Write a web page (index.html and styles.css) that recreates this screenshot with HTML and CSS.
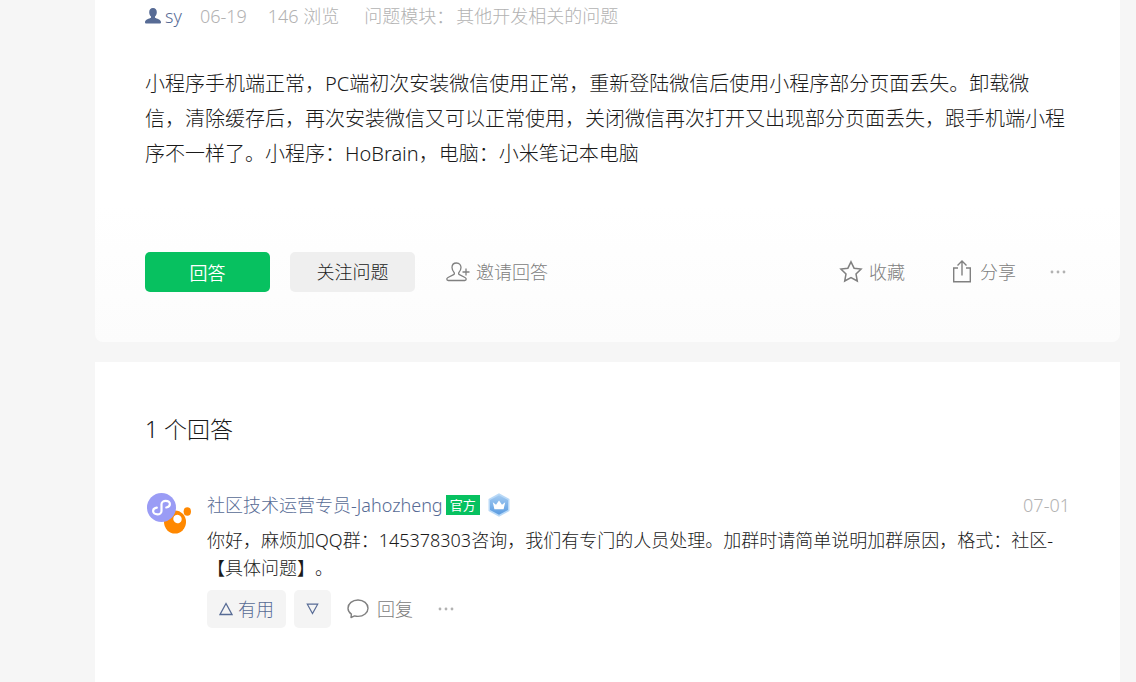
FILE: index.html
```html
<!DOCTYPE html>
<html lang="zh-CN">
<head>
<meta charset="utf-8">
<title>社区问题</title>
<link rel="stylesheet" href="styles.css">
</head>
<body>
<main class="page">
  <article class="card question">
    <div class="meta">
      <a class="author" href="#"><svg width="16" height="16" viewBox="0 0 16 16" fill="currentColor" aria-hidden="true"><path d="M8 0C5.500 0 4.200 1.800 4.200 4.200c0 1.800.7 3.400 1.800 4.300v1.200C4.500 10.500 0 11.500 0 14v.6c0 .5.400.9.900.9h14.200c.5 0 .9-.4.900-.9V14c0-2.500-4.500-3.500-6-4.300V8.500c1.100-.9 1.800-2.500 1.800-4.300C11.800 1.800 10.500 0 8 0z"/></svg>sy</a>
      <span class="date">06-19</span>
      <span class="views">146 浏览</span>
      <span class="module">问题模块：</span>
      <span>其他开发相关的问题</span>
    </div>
    <p class="content">小程序手机端正常，PC端初次安装微信使用正常，重新登陆微信后使用小程序部分页面丢失。卸载微信，清除缓存后，再次安装微信又可以正常使用，关闭微信再次打开又出现部分页面丢失，跟手机端小程序不一样了。小程序：HoBrain，电脑：小米笔记本电脑</p>
    <div class="actions">
      <button class="btn primary" type="button">回答</button>
      <button class="btn" type="button">关注问题</button>
      <button class="link invite" type="button"><svg width="24" height="20" viewBox="0 0 24 20" fill="none" stroke="currentColor" stroke-width="1.300" stroke-linejoin="round" aria-hidden="true"><path d="M10.500 1C7.500 1 6 3 6 5.600c0 2.200 1 3.500 2 4.700.6.800.5 1.900-.4 2.400L2 15.500c-.8.400-1.200.9-1.200 1.600 0 .9.500 1.400 1.400 1.400h16.600c.9 0 1.400-.5 1.400-1.400 0-.7-.4-1.200-1.200-1.600l-5.600-2.800c-.9-.5-1-1.600-.4-2.400 1-1.200 2-2.500 2-4.700C15 3 13.500 1 10.500 1zM16.500 10h7M20 6.500v7"/></svg>邀请回答</button>
      <button class="link favorite" type="button"><svg width="24" height="24" viewBox="0 0 24 24" fill="none" stroke="currentColor" stroke-width="1.500" stroke-linejoin="miter" aria-hidden="true"><path d="M12 1.800l3.100 6.400 7 .9-5.100 4.900 1.300 7-6.300-3.400-6.300 3.400 1.300-7-5.100-4.900 7-.9z"/></svg>收藏</button>
      <button class="link share" type="button"><svg width="20" height="24" viewBox="0 0 20 24" fill="none" stroke="currentColor" stroke-width="1.400" aria-hidden="true"><path d="M6 8H1.700v13.800h16.600V8H14M10 15.500V1M5.500 5.500L10 1l4.500 4.500"/></svg>分享</button>
      <button class="link more" type="button" aria-label="更多"><svg width="16" height="4" viewBox="0 0 16 4" fill="currentColor"><circle cx="2" cy="2" r="1.400"/><circle cx="8" cy="2" r="1.400"/><circle cx="14" cy="2" r="1.400"/></svg></button>
    </div>
  </article>
  <section class="card answers">
    <h2 class="title">1 个回答</h2>
    <article class="answer">
      <svg class="avatar" width="46" height="42" viewBox="0 0 46 42" aria-hidden="true"><ellipse cx="40.300" cy="18.500" rx="3.700" ry="4.200" fill="#ff8800"/><ellipse cx="28" cy="29" rx="11" ry="11.500" fill="#ff8800"/><ellipse cx="30.500" cy="26" rx="4.200" ry="4.300" fill="#fff" transform="rotate(-30 30.500 26)"/><circle cx="14.500" cy="14.500" r="14.500" fill="#9a9cf5"/><path d="M9.800 14.700c-2.100.3-3.700 1.700-3.700 3.400 0 1.900 1.900 3.300 4.300 3.300 2.300 0 4.100-1.500 4.100-3.400v-6.700c0-2 1.900-3.500 4.200-3.500s4.200 1.400 4.200 3.300c0 1.700-1.400 3.100-3.600 3.400" fill="none" stroke="#fff" stroke-width="2.200" stroke-linecap="round"/></svg>
      <div class="body">
        <header class="head">
          <a class="name" href="#">社区技术运营专员-Jahozheng</a>
          <span class="tag">官方</span>
          <svg class="medal" width="22" height="24" viewBox="0 0 22 24" aria-hidden="true"><defs><linearGradient id="medal" x1="0" y1="0" x2="0" y2="1"><stop offset="0" stop-color="#a3cbf2"/><stop offset="1" stop-color="#5a9be0"/></linearGradient></defs><path d="M11 .3L21.500 6v12L11 23.700.5 18V6z" fill="#b9d9f7"/><path d="M11 2.200L20 7v10l-9 4.800L2 17V7z" fill="url(#medal)"/><path d="M4.800 9.300l3.200 2.500 3-4.300 3 4.300 3.200-2.500-1.600 7H6.400z" fill="#fff"/></svg>
          <time class="time">07-01</time>
        </header>
        <p class="reply">你好，麻烦加QQ群：145378303咨询，我们有专门的人员处理。加群时请简单说明加群原因，格式：社区-【具体问题】。</p>
        <div class="tools">
          <button class="vote" type="button"><svg width="14" height="14" viewBox="0 0 14 14" fill="none" stroke="currentColor" stroke-width="1.300" aria-hidden="true"><path d="M7 1.500L13 12.500H1z"/></svg>有用</button>
          <button class="vote" type="button" aria-label="没用"><svg width="13" height="12" viewBox="0 0 13 12" fill="none" stroke="currentColor" stroke-width="1.200" aria-hidden="true"><path d="M1.300 1.200h10.400L6.500 10.600z"/></svg></button>
          <button class="link comment" type="button"><svg width="22" height="20" viewBox="0 0 22 20" fill="none" stroke="currentColor" stroke-width="1.400" stroke-linejoin="round" aria-hidden="true"><path d="M4 18.500l.4-3.400C2.300 13.700 1 11.600 1 9.200 1 4.700 5.400 1 11 1s10 3.700 10 8.200-4.400 8.200-10 8.200c-1.200 0-2.300-.1-3.400-.5z"/></svg>回复</button>
          <button class="link more" type="button" aria-label="更多"><svg width="16" height="4" viewBox="0 0 16 4" fill="currentColor"><circle cx="2" cy="2" r="1.400"/><circle cx="8" cy="2" r="1.400"/><circle cx="14" cy="2" r="1.400"/></svg></button>
        </div>
      </div>
    </article>
  </section>
</main>
</body>
</html>
```
FILE: styles.css
```css
* { box-sizing: border-box; }
body {
  margin: 0;
  background: #f6f6f6;
  color: #1a1a1a;
  font: 350 18px/28px "Noto Sans", "Noto Sans CJK SC Light", "Noto Sans CJK SC", sans-serif;
  text-spacing-trim: space-all;
}
button { font: inherit; color: inherit; border: 0; cursor: pointer; }
a { color: #576b95; text-decoration: none; }
svg { flex: none; }
p, h2 { margin: 0; }
.page {
  display: flex;
  flex-direction: column;
  gap: 20px;
  min-height: 100vh;
  padding: 0 16px 0 95px;
}
.card { background: #fff; padding: 0 50px; }
.question {
  padding-bottom: 50px;
  background: linear-gradient(#fff 60%, #fcfcfc);
  border-radius: 0 0 8px 8px;
}
.meta {
  display: flex;
  align-items: center;
  height: 32px;
  color: #b2b2b2;
}
.author { display: flex; align-items: center; gap: 4px; }
.date { margin-left: 18px; }
.views { margin-left: 21px; }
.module { margin: 0 2px 0 25px; }
.content {
  margin-top: 34px;
  padding-right: 4px;
  font-size: 20px;
  line-height: 35px;
}
.actions {
  display: flex;
  align-items: center;
  margin-top: 81px;
}
.btn {
  width: 125px;
  height: 40px;
  margin-right: 20px;
  padding: 0;
  border-radius: 5px;
  background: #efefef;
}
.primary {
  background: #07c160;
  color: #fff;
  font-family: "Noto Sans CJK SC", sans-serif;
}
.link {
  display: flex;
  align-items: center;
  gap: 6px;
  padding: 0;
  background: none;
  color: #808080;
}
.invite { margin-left: 11px; }
.favorite { margin-left: auto; }
.share { margin-left: 47px; gap: 8px; }
.more { margin-left: 34px; color: #b2b2b2; }
.actions .more { margin-right: 4px; }
.answers { flex: 1; padding-top: 49px; padding-bottom: 50px; }
.title {
  font-size: 23px;
  font-weight: 350;
  line-height: 36px;
}
.answer {
  display: flex;
  gap: 14px;
  margin-top: 44px;
}
.avatar { margin: 2px 0 0 2px; }
.body { flex: 1; }
.head { display: flex; align-items: center; }
.tag {
  margin: 0 8px 0 3px;
  padding: 0 4px;
  background: #07c160;
  color: #fff;
  font-family: "Noto Sans CJK SC", sans-serif;
  font-size: 13px;
  font-weight: 400;
  line-height: 20px;
}
.time { margin-left: auto; color: #b2b2b2; }
.reply { margin-top: 7px; }
.tools { display: flex; align-items: center; margin-top: 8px; }
.vote {
  display: flex;
  align-items: center;
  gap: 5px;
  height: 38px;
  margin-right: 8px;
  padding: 0 12px;
  border-radius: 5px;
  background: #f4f4f4;
  color: #576b95;
}
.comment { margin-left: 8px; gap: 8px; }
.tools .more { margin-left: 25px; }
```
